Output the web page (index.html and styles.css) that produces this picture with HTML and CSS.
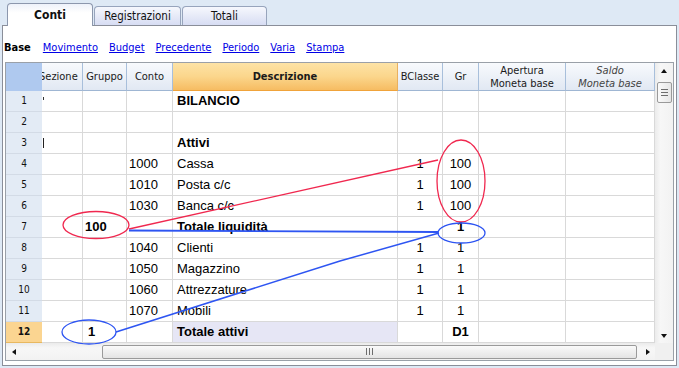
FILE: index.html
```html
<!DOCTYPE html>
<html>
<head>
<meta charset="utf-8">
<link rel="stylesheet" href="styles.css">
</head>
<body>
<div class="tabs">
  <div class="tab active">Conti</div>
  <div class="tab reg">Registrazioni</div>
  <div class="tab tot">Totali</div>
</div>
<div class="panel">
  <div class="nav">
    <b>Base</b>
    <a>Movimento</a>
    <a>Budget</a>
    <a>Precedente</a>
    <a>Periodo</a>
    <a>Varia</a>
    <a>Stampa</a>
  </div>
  <div class="gridbox">
    <div class="main">
      <div class="sheet">
        <div class="row head">
          <div class="c rn corner-h"></div>
          <div class="c clip"><span>Sezione</span></div>
          <div class="c">Gruppo</div>
          <div class="c">Conto</div>
          <div class="c desc-h">Descrizione</div>
          <div class="c">BClasse</div>
          <div class="c">Gr</div>
          <div class="c two">Apertura<br>Moneta base</div>
          <div class="c two it">Saldo<br>Moneta base</div>
        </div>
        <div class="row">
          <div class="c rn">1</div><div class="c sez"><span class="mark1"></span></div><div class="c"></div><div class="c"></div>
          <div class="c d b">BILANCIO</div><div class="c"></div><div class="c"></div><div class="c"></div><div class="c"></div>
        </div>
        <div class="row">
          <div class="c rn">2</div><div class="c"></div><div class="c"></div><div class="c"></div>
          <div class="c d"></div><div class="c"></div><div class="c"></div><div class="c"></div><div class="c"></div>
        </div>
        <div class="row">
          <div class="c rn">3</div><div class="c sez"><span class="mark3"></span></div><div class="c"></div><div class="c"></div>
          <div class="c d b">Attivi</div><div class="c"></div><div class="c"></div><div class="c"></div><div class="c"></div>
        </div>
        <div class="row">
          <div class="c rn">4</div><div class="c"></div><div class="c"></div><div class="c n">1000</div>
          <div class="c d">Cassa</div><div class="c m">1</div><div class="c m">100</div><div class="c"></div><div class="c"></div>
        </div>
        <div class="row">
          <div class="c rn">5</div><div class="c"></div><div class="c"></div><div class="c n">1010</div>
          <div class="c d">Posta c/c</div><div class="c m">1</div><div class="c m">100</div><div class="c"></div><div class="c"></div>
        </div>
        <div class="row">
          <div class="c rn">6</div><div class="c"></div><div class="c"></div><div class="c n">1030</div>
          <div class="c d">Banca c/c</div><div class="c m">1</div><div class="c m">100</div><div class="c"></div><div class="c"></div>
        </div>
        <div class="row">
          <div class="c rn">7</div><div class="c"></div><div class="c n b">100</div><div class="c"></div>
          <div class="c d b">Totale liquidità</div><div class="c"></div><div class="c m b">1</div><div class="c"></div><div class="c"></div>
        </div>
        <div class="row">
          <div class="c rn">8</div><div class="c"></div><div class="c"></div><div class="c n">1040</div>
          <div class="c d">Clienti</div><div class="c m">1</div><div class="c m">1</div><div class="c"></div><div class="c"></div>
        </div>
        <div class="row">
          <div class="c rn">9</div><div class="c"></div><div class="c"></div><div class="c n">1050</div>
          <div class="c d">Magazzino</div><div class="c m">1</div><div class="c m">1</div><div class="c"></div><div class="c"></div>
        </div>
        <div class="row">
          <div class="c rn">10</div><div class="c"></div><div class="c"></div><div class="c n">1060</div>
          <div class="c d">Attrezzature</div><div class="c m">1</div><div class="c m">1</div><div class="c"></div><div class="c"></div>
        </div>
        <div class="row">
          <div class="c rn">11</div><div class="c"></div><div class="c"></div><div class="c n">1070</div>
          <div class="c d">Mobili</div><div class="c m">1</div><div class="c m">1</div><div class="c"></div><div class="c"></div>
        </div>
        <div class="row cur">
          <div class="c rn sel">12</div><div class="c"></div><div class="c n b one">1</div><div class="c"></div>
          <div class="c d b seld">Totale attivi</div><div class="c"></div><div class="c m b">D1</div><div class="c"></div><div class="c"></div>
        </div>
      </div>
      <div class="vscroll">
        <div class="arrow up"></div>
        <div class="vthumb"><i></i><i></i><i></i></div>
        <div class="vspace"></div>
        <div class="arrow down"></div>
      </div>
    </div>
    <div class="hbar">
      <div class="hscroll">
        <div class="arrow left"></div>
        <div class="hthumb"><i></i><i></i><i></i></div>
        <div class="arrow right"></div>
      </div>
      <div class="sqcorner"></div>
    </div>
  </div>
</div>
<svg class="annot" width="679" height="368" viewBox="0 0 679 368">
  <g fill="none" stroke-width="1.3">
    <line x1="129" y1="229" x2="438" y2="160" stroke="#f0284f"/>
    <ellipse cx="96" cy="225" rx="33" ry="13.5" stroke="#f0284f"/>
    <ellipse cx="461" cy="181" rx="24" ry="41" stroke="#f0284f"/>
    <line x1="129" y1="230.5" x2="438" y2="232" stroke="#2e55f2" stroke-width="1.8"/>
    <polyline points="116,332 340,261 439,233" stroke="#2e55f2" stroke-width="1.5"/>
    <ellipse cx="461.5" cy="233" rx="23.5" ry="10" stroke="#2e55f2"/>
    <ellipse cx="89" cy="332" rx="27" ry="12" stroke="#2e55f2"/>
  </g>
</svg>
</body>
</html>
```

FILE: styles.css
```css
* { box-sizing: border-box; }
html, body { margin: 0; padding: 0; }
body {
  position: relative;
  width: 679px;
  height: 368px;
  overflow: hidden;
  background: #dee9f5;
  font-family: "DejaVu Sans Condensed", "Liberation Sans", sans-serif;
  font-size: 11px;
  color: #000;
}

/* tabs */
.tabs {
  height: 25px;
  padding-left: 7px;
  display: flex;
  align-items: flex-end;
}
.tab {
  height: 19px;
  border: 1px solid #97a4bc;
  border-bottom: none;
  border-radius: 4px 4px 0 0;
  background: linear-gradient(#f6f8fd, #d7ddf3);
  text-align: center;
  line-height: 19px;
  font-size: 11.5px;
  color: #111;
}
.tab.active {
  position: relative;
  z-index: 2;
  width: 86px;
  height: 23px;
  margin-bottom: -1px;
  background: linear-gradient(#eef2fa, #ffffff 40%);
  font-weight: bold;
  font-size: 12px;
  line-height: 22px;
  border-color: #8c97ad;
}
.tab.reg { width: 87px; margin-left: 1px; }
.tab.tot { width: 85px; margin-left: 1px; }

/* panel */
.panel {
  margin-left: 2px;
  width: 675px;
  height: 341px;
  background: #fff;
  border: 1px solid #8a8e99;
  padding-left: 1px;
}
.nav {
  margin-top: 12px;
  height: 18px;
  display: flex;
  align-items: center;
  gap: 11px;
  font-size: 11px;
}
.nav b { margin-right: 1px; }
.nav a {
  color: #0000e6;
  text-decoration: underline;
}

/* grid */
.gridbox {
  margin-top: 6px;
  margin-left: 1px;
  width: 669px;
  border: 1px solid #9aa0a8;
  background: #fff;
}
.main { display: flex; }
.sheet { width: 649px; }
.row {
  display: grid;
  grid-template-columns: 36px 41px 44px 46px 225px 45px 36px 87px 89px;
  height: 21px;
}
.c {
  border-right: 1px solid #d9d9d9;
  border-bottom: 1px solid #d9d9d9;
  font-family: "Liberation Sans", Arial, sans-serif;
  font-size: 13px;
  line-height: 20px;
  white-space: nowrap;
  overflow: hidden;
}
.rn {
  background: #e3ebf5;
  border-right: none;
  border-bottom: 1px solid #d3dbe6;
  text-align: center;
  font-family: "DejaVu Sans Condensed", "Liberation Sans", sans-serif;
  font-size: 10px;
  color: #111;
}
.rn.sel {
  background: #fbd591;
  font-weight: bold;
  border-bottom-color: #e8b860;
}
.d { padding-left: 4px; }
.n { padding-left: 2px; }
.n.one { padding-left: 5px; }
.m { text-align: center; }
.b { font-weight: bold; }
.seld { background: #e6e6f5; }
.mark1 {
  display: block;
  width: 1px;
  height: 3px;
  margin-top: 6px;
  margin-left: 1px;
  background: #333;
}
.mark3 {
  display: block;
  width: 1px;
  height: 10px;
  margin-top: 5px;
  margin-left: 1px;
  background: #222;
}

.head { height: 28px; }
.head .c {
  background: linear-gradient(#f8fafd, #e1e8f3);
  border-right: 1px solid #a8bfdb;
  border-bottom: 1px solid #9fb6d3;
  font-family: "DejaVu Sans Condensed", "Liberation Sans", sans-serif;
  font-size: 11px;
  line-height: 27px;
  text-align: center;
  color: #1a1a1a;
}
.head .corner-h {
  background: #afc9ef;
  border-right: none;
  border-bottom: 1px solid #afc9ef;
}
.head .clip {
  text-align: left;
  text-indent: -3px;
}
.head .desc-h {
  background: linear-gradient(#fde3a6, #fbd68c 50%, #f6bc62);
  border-bottom: 1px solid #f0a33a;
  border-right: 1px solid #e8b060;
  font-weight: bold;
}
.head .two {
  line-height: 13px;
  padding-top: 1px;
}
.head .it {
  font-style: italic;
  color: #444;
}

/* vertical scrollbar */
.vscroll {
  width: 18px;
  height: 280px;
  background: linear-gradient(90deg, #ebebeb, #f7f7f7 30%, #f2f2f2);
  display: flex;
  flex-direction: column;
  align-items: center;
}
.arrow { width: 0; height: 0; }
.arrow.up {
  margin-top: 6px;
  border-left: 3.5px solid transparent;
  border-right: 3.5px solid transparent;
  border-bottom: 4px solid #111;
}
.arrow.down {
  margin-bottom: 5px;
  border-left: 3.5px solid transparent;
  border-right: 3.5px solid transparent;
  border-top: 4px solid #111;
}
.vthumb {
  margin-top: 9px;
  width: 15px;
  height: 21px;
  margin-left: 1px;
  border: 1px solid #9a9a9a;
  border-radius: 2px;
  background: linear-gradient(90deg, #fafafa, #e6e6e6);
  display: flex;
  flex-direction: column;
  justify-content: center;
  align-items: center;
  gap: 2px;
}
.vthumb i {
  display: block;
  width: 7px;
  height: 1px;
  background: #6d6d6d;
}
.vspace { flex: 1; }

/* horizontal scrollbar */
.hbar { display: flex; height: 17px; }
.hscroll {
  width: 649px;
  background: linear-gradient(#ebebeb, #f7f7f7 30%, #f2f2f2);
  display: flex;
  align-items: center;
}
.arrow.left {
  margin-left: 6px;
  border-top: 3.5px solid transparent;
  border-bottom: 3.5px solid transparent;
  border-right: 4px solid #111;
}
.hthumb {
  margin-left: 86px;
  width: 535px;
  height: 14px;
  border: 1px solid #9a9a9a;
  border-radius: 2px;
  background: linear-gradient(#fafafa, #e4e4e4);
  display: flex;
  justify-content: center;
  align-items: center;
  gap: 2px;
}
.hthumb i {
  display: block;
  width: 1px;
  height: 7px;
  background: #6d6d6d;
}
.arrow.right {
  margin-left: 9px;
  border-top: 3.5px solid transparent;
  border-bottom: 3.5px solid transparent;
  border-left: 4px solid #111;
}
.sqcorner {
  width: 18px;
  background: #f0f0f0;
}

/* annotation overlay */
.annot {
  position: absolute;
  left: 0;
  top: 0;
  pointer-events: none;
}
```
